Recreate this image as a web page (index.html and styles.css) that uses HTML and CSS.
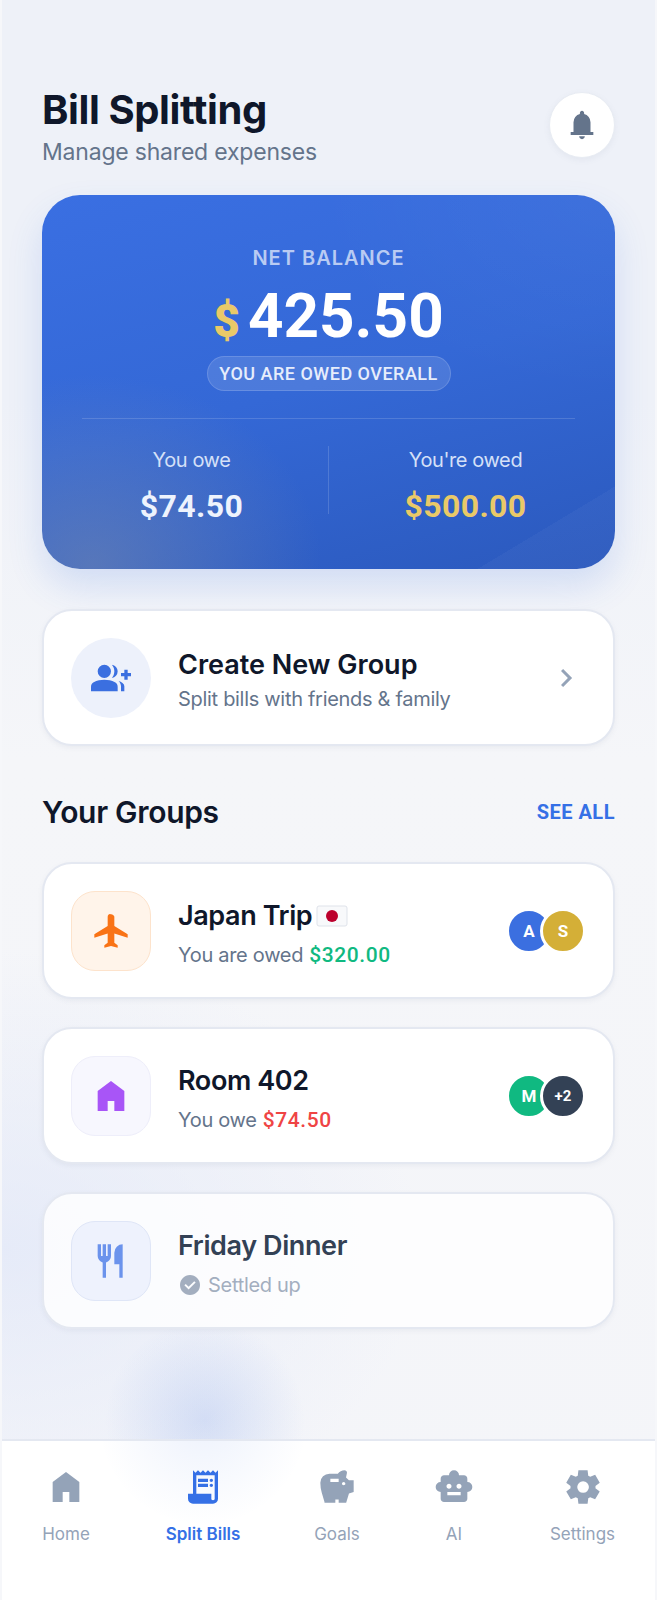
FILE: index.html
```html
<!DOCTYPE html>
<html lang="en">
<head>
  <meta charset="UTF-8" />
  <meta name="viewport" content="width=device-width, initial-scale=1.0"/>
  <title>Bill Splitting</title>
  <link rel="stylesheet" href="styles.css">
</head>
<body>
  <div class="screen">
    <main class="content">
      <header class="top">
        <div>
          <h1>Bill Splitting</h1>
          <p class="subtitle">Manage shared expenses</p>
        </div>
        <button class="bell">
          <svg width="34" height="34" viewBox="0 -960 960 960"><path d="M160-200v-80h80v-280q0-83 50-147.5T420-792v-28q0-25 17.5-42.5T480-880q25 0 42.5 17.5T540-820v28q80 20 130 84.5T720-560v280h80v80H160ZM480-80q-33 0-56.5-23.5T400-160h160q0 33-23.5 56.5T480-80Z"/></svg>
        </button>
      </header>

      <section class="balance">
        <div class="balance-label">NET BALANCE</div>
        <div class="balance-amount"><span class="dollar">$</span>425.50</div>
        <div class="balance-pill">YOU ARE OWED OVERALL</div>
        <div class="balance-stats">
          <div class="stat">
            <div class="stat-label">You owe</div>
            <div class="stat-value">$74.50</div>
          </div>
          <div class="stat-line"></div>
          <div class="stat">
            <div class="stat-label">You're owed</div>
            <div class="stat-value gold">$500.00</div>
          </div>
        </div>
      </section>

      <a class="card create" href="#">
        <div class="icon-round">
          <svg width="40" height="40" viewBox="0 -960 960 960"><path d="M500-482q29-32 44.5-73t15.5-85q0-44-15.5-85T500-798q60 8 100 53t40 105q0 60-40 105t-100 53Zm220 322v-120q0-36-16-68.5T662-406q51 18 94.5 46.5T800-280v120h-80Zm80-280v-80h-80v-80h80v-80h80v80h80v80h-80v80ZM320-480q-66 0-113-47t-47-113q0-66 47-113t113-47q66 0 113 47t47 113q0 66-47 113t-113 47ZM0-160v-112q0-34 17.5-62.5T64-378q62-31 126-46.5T320-440q66 0 130 15.5T576-378q29 15 46.5 43.5T640-272v112H0Z"/></svg>
        </div>
        <div class="card-text">
          <div class="card-title">Create New Group</div>
          <div class="card-sub">Split bills with friends &amp; family</div>
        </div>
        <svg class="chevron" width="36" height="36" viewBox="0 -960 960 960"><path d="M504-480 320-664l56-56 240 240-240 240-56-56 184-184Z"/></svg>
      </a>

      <div class="section-head">
        <h2>Your Groups</h2>
        <a class="see-all" href="#">SEE ALL</a>
      </div>

      <div class="groups">
        <div class="card">
          <div class="icon-box orange">
            <svg width="40" height="40" viewBox="0 -960 960 960"><path d="M320-80v-60l80-60v-220L80-320v-80l320-200v-220q0-33 23.5-56.5T480-880q33 0 56.5 23.5T560-820v220l320 200v80L560-420v220l80 60v60l-160-40-160 40Z"/></svg>
          </div>
          <div class="card-text">
            <div class="card-title">Japan Trip
              <svg width="32" height="24" viewBox="0 0 32 24"><rect x="1" y="2" width="30" height="20" rx="2" fill="#f8f9fb" stroke="#dfe3ea"/><circle cx="16" cy="12" r="6" fill="#bc002d"/></svg>
            </div>
            <div class="card-sub">You are owed <span class="amount green">$320.00</span></div>
          </div>
          <div class="avatars">
            <span class="avatar blue">A</span>
            <span class="avatar yellow">S</span>
          </div>
        </div>

        <div class="card">
          <div class="icon-box purple">
            <svg width="40" height="40" viewBox="0 -960 960 960"><path d="M160-120v-480l320-240 320 240v480H560v-240H400v240H160Z"/></svg>
          </div>
          <div class="card-text">
            <div class="card-title">Room 402</div>
            <div class="card-sub">You owe <span class="amount red">$74.50</span></div>
          </div>
          <div class="avatars">
            <span class="avatar teal">M</span>
            <span class="avatar dark">+2</span>
          </div>
        </div>

        <div class="card settled">
          <div class="icon-box pale">
            <svg width="40" height="40" viewBox="0 -960 960 960"><path d="M280-80v-366q-51-14-85.5-56T160-600v-280h80v280h40v-280h80v280h40v-280h80v280q0 56-34.5 98T360-446v366h-80Zm400 0v-320H560v-280q0-83 58.5-141.5T760-880v800h-80Z"/></svg>
          </div>
          <div class="card-text">
            <div class="card-title">Friday Dinner</div>
            <div class="card-sub">
              <svg width="24" height="24" viewBox="0 -960 960 960"><path d="m424-296 282-282-56-56-226 226-114-114-56 56 170 170Zm56 216q-83 0-156-31.5T197-197q-54-54-85.5-127T80-480q0-83 31.5-156T197-763q54-54 127-85.5T480-880q83 0 156 31.5T763-763q54 54 85.5 127T880-480q0 83-31.5 156T763-197q-54 54-127 85.5T480-80Z"/></svg>
              Settled up
            </div>
          </div>
        </div>
      </div>
    </main>

    <nav class="tabbar">
      <a class="tab" href="#">
        <svg width="40" height="40" viewBox="0 -960 960 960"><path d="M160-120v-480l320-240 320 240v480H560v-240H400v240H160Z"/></svg>
        Home
      </a>
      <a class="tab active" href="#">
        <svg width="40" height="40" viewBox="0 -960 960 960"><path d="M240-80q-50 0-85-35t-35-85v-120h120v-560l60 60 60-60 60 60 60-60 60 60 60-60 60 60 60-60 60 60 60-60v680q0 50-35 85t-85 35H240Zm480-80q17 0 28.5-11.5T760-200v-560H320v440h360v120q0 17 11.5 28.5T720-160ZM360-600v-80h240v80H360Zm0 120v-80h240v80H360Zm320-120q-17 0-28.5-11.5T640-640q0-17 11.5-28.5T680-680q17 0 28.5 11.5T720-640q0 17-11.5 28.5T680-600Zm0 120q-17 0-28.5-11.5T640-520q0-17 11.5-28.5T680-560q17 0 28.5 11.5T720-520q0 17-11.5 28.5T680-480Z"/></svg>
        Split Bills
      </a>
      <a class="tab" href="#">
        <svg width="40" height="40" viewBox="0 -960 960 960"><path fill-rule="evenodd" d="M180-120q-34-114-67-227.5T80-580q0-92 64-156t156-64h200q29-38 70.5-59t89.5-21q25 0 42.5 17.5T720-820l-24 110 71 70h113v279l-113 37-67 224H520v-80h-80v80H180Zm140-560v80h200v-80H320Zm320 80q-17 0-28.5 11.5T600-560q0 17 11.5 28.5T640-520q17 0 28.5-11.5T680-560q0-17-11.5-28.5T640-600Z"/></svg>
        Goals
      </a>
      <a class="tab" href="#">
        <svg width="40" height="40" viewBox="0 -960 960 960"><path d="M160-360q-50 0-85-35t-35-85q0-50 35-85t85-35v-80q0-33 23.5-56.5T240-760h120q0-50 35-85t85-35q50 0 85 35t35 85h120q33 0 56.5 23.5T800-680v80q50 0 85 35t35 85q0 50-35 85t-85 35v160q0 33-23.5 56.5T720-120H240q-33 0-56.5-23.5T160-200v-160Zm200-80q25 0 42.5-17.5T420-500q0-25-17.5-42.5T360-560q-25 0-42.5 17.5T300-500q0 25 17.5 42.5T360-440Zm240 0q25 0 42.5-17.5T660-500q0-25-17.5-42.5T600-560q-25 0-42.5 17.5T540-500q0 25 17.5 42.5T600-440ZM320-280h320v-80H320v80Z"/></svg>
        AI
      </a>
      <a class="tab" href="#">
        <svg width="40" height="40" viewBox="0 -960 960 960"><path d="m370-80-16-128q-13-5-24.5-12T307-235l-119 50L78-375l103-78q-1-7-1-13.5v-27q0-6.5 1-13.5L78-585l110-190 119 50q11-8 23-15t24-12l16-128h220l16 128q13 5 24.5 12t22.5 15l119-50 110 190-103 78q1 7 1 13.5v27q0 6.5-2 13.5l103 78-110 190-118-50q-11 8-23 15t-24 12L590-80H370Zm112-260q58 0 99-41t41-99q0-58-41-99t-99-41q-59 0-99.5 41T342-480q0 58 40.5 99t99.5 41Z"/></svg>
        Settings
      </a>
    </nav>
  </div>
</body>
</html>
```

FILE: styles.css
```css
* {
  box-sizing: border-box;
}

html, body {
  margin: 0;
  padding: 0;
}

body {
  font-family: Inter, "Noto Sans", sans-serif;
  color: #0f172a;
  background: #f5f6f9;
}

a {
  color: inherit;
  text-decoration: none;
}

svg {
  display: block;
  fill: currentColor;
}

.screen {
  height: 1600px;
  display: flex;
  flex-direction: column;
  overflow: hidden;
  background:
    radial-gradient(circle at 203px 1420px, rgba(59,111,224,0.16), rgba(59,111,224,0) 100px),
    radial-gradient(ellipse 420px 300px at 0 1250px, rgba(226,232,248,0.8), rgba(226,232,248,0)),
    linear-gradient(180deg, #eef1f8 0, #eef1f8 400px, #f5f6f9 760px, #f4f5f9 100%);
  border-left: 2px solid #f6f7fa;
  border-right: 2px solid #f6f7fa;
}

.content {
  flex: 1;
  padding: 87px 40px 0;
}

/* header */
.top {
  display: flex;
  justify-content: space-between;
  align-items: flex-start;
  height: 84px;
}

h1 {
  margin: 0;
  font-size: 40px;
  line-height: 46px;
  font-weight: 700;
  letter-spacing: -0.4px;
  color: #0f172a;
}

.subtitle {
  margin: 4px 0 0;
  font-size: 23px;
  line-height: 30px;
  letter-spacing: -0.2px;
  color: #64748b;
}

.bell {
  width: 66px;
  height: 66px;
  margin: 5px 0 0;
  padding: 0;
  display: flex;
  align-items: center;
  justify-content: center;
  background: #fff;
  border: 1px solid #e8ecf3;
  border-radius: 50%;
  color: #64748b;
  box-shadow: 0 2px 6px rgba(100,116,139,0.08);
}

/* balance card */
.balance {
  margin-top: 24px;
  height: 374px;
  padding: 51px 40px 0;
  border-radius: 38px;
  text-align: center;
  color: #fff;
  background:
    radial-gradient(ellipse 230px 190px at 50px 370px, rgba(125,140,170,0.5), rgba(125,140,170,0)),
    radial-gradient(ellipse 300px 200px at 100% 0, rgba(255,255,255,0.04), rgba(255,255,255,0)),
    linear-gradient(149deg, rgba(255,255,255,0) 88.5%, rgba(255,255,255,0.03) 88.5%),
    linear-gradient(165deg, #3a6fe2 0, #3468d6 50%, #2b59bd 100%);
  box-shadow: 0 18px 34px rgba(59,111,224,0.17);
}

.balance-label {
  font-size: 20px;
  line-height: 24px;
  font-weight: 600;
  letter-spacing: 1px;
  color: #b9cbf3;
}

.balance-amount {
  margin-top: 11px;
  font-family: Roboto, sans-serif;
  font-size: 62px;
  line-height: 70px;
  font-weight: 700;
}

.dollar {
  margin-right: 8px;
  font-size: 46px;
  font-weight: 900;
  color: #e9c968;
}

.balance-pill {
  width: 244px;
  height: 35px;
  margin: 0 auto;
  border: 1px solid rgba(255,255,255,0.15);
  border-radius: 18px;
  background: rgba(255,255,255,0.12);
  font-family: Roboto, sans-serif;
  font-size: 18px;
  line-height: 33px;
  font-weight: 500;
  letter-spacing: 0.5px;
  color: #e6edfb;
}

.balance-stats {
  display: grid;
  grid-template-columns: 1fr 1px 1fr;
  gap: 27px;
  margin-top: 27px;
  padding-top: 27px;
  border-top: 1px solid rgba(255,255,255,0.15);
}

.stat-label {
  font-size: 20px;
  line-height: 28px;
  letter-spacing: -0.4px;
  color: #d5e0f8;
}

.stat-value {
  margin-top: 13px;
  font-family: Roboto, sans-serif;
  font-size: 32px;
  line-height: 38px;
  font-weight: 700;
  letter-spacing: 0.4px;
  color: #eef3fd;
}

.gold {
  color: #e9c968;
}

.stat-line {
  height: 68px;
  background: rgba(255,255,255,0.15);
}

/* cards */
.card {
  height: 137px;
  display: flex;
  align-items: center;
  padding: 0 27px;
  background: #fff;
  border: 2px solid #e4e8f1;
  border-radius: 30px;
  box-shadow: 0 2px 5px rgba(100,116,139,0.08);
}

.create {
  margin-top: 40px;
}

.icon-round,
.icon-box {
  flex: none;
  width: 80px;
  height: 80px;
  display: flex;
  align-items: center;
  justify-content: center;
}

.icon-round {
  border-radius: 50%;
  background: #edf1fb;
  color: #3b6fe0;
}

.icon-box {
  border-radius: 24px;
  border: 1px solid;
}

.orange {
  background: #fff4ea;
  border-color: #fde3cc;
  color: #f97316;
}

.purple {
  background: #f7f7fe;
  border-color: #eeeefa;
  color: #a855f7;
}

.pale {
  background: #eef2fd;
  border-color: #dfe6f7;
  color: #6b93ec;
}

.card-text {
  flex: 1;
  margin-left: 27px;
  padding-top: 4px;
}

.card-title {
  display: flex;
  align-items: center;
  gap: 4px;
  font-size: 27px;
  line-height: 36px;
  font-weight: 600;
  letter-spacing: -0.4px;
  color: #0f172a;
}

.card-sub {
  display: flex;
  align-items: center;
  gap: 6px;
  margin-top: 8px;
  font-size: 20px;
  line-height: 26px;
  letter-spacing: -0.3px;
  color: #64748b;
}

.create .card-title {
  letter-spacing: 0;
}

.create .card-sub {
  margin-top: 3px;
}

.amount {
  font-family: Roboto, sans-serif;
  font-weight: 500;
  letter-spacing: 0.6px;
  font-size: 21px;
}

.green {
  color: #10b981;
}

.red {
  color: #ef4444;
}

.chevron {
  color: #94a3b8;
  margin-right: 1px;
}

.section-head {
  display: flex;
  justify-content: space-between;
  align-items: center;
  margin-top: 45px;
  height: 42px;
}

h2 {
  margin: 0;
  font-size: 30px;
  font-weight: 600;
  letter-spacing: -0.3px;
}

.see-all {
  font-family: Roboto, sans-serif;
  font-size: 20px;
  font-weight: 700;
  letter-spacing: 0.5px;
  color: #3570e6;
}

.groups {
  display: flex;
  flex-direction: column;
  gap: 28px;
  margin-top: 29px;
}

.avatars {
  display: flex;
}

.avatar {
  width: 46px;
  height: 46px;
  display: flex;
  align-items: center;
  justify-content: center;
  border: 3px solid #fff;
  border-radius: 50%;
  font-family: Roboto, sans-serif;
  font-size: 17px;
  font-weight: 700;
  color: #fff;
}

.avatar + .avatar {
  margin-left: -12px;
}

.blue {
  background: #3b6fe0;
}

.yellow {
  background: #d4af37;
}

.teal {
  background: #10b981;
}

.dark {
  background: #334155;
  font-size: 15px;
}

.settled {
  background: rgba(255,255,255,0.8);
}

.settled .card-title {
  color: #334155;
}

.settled .card-sub {
  color: #a3aebf;
}

/* bottom nav */
.tabbar {
  height: 161px;
  display: grid;
  grid-template-columns: 128px 146px 122px 112px 1fr;
  padding-top: 26px;
  align-items: start;
  background:
    radial-gradient(circle at 201px -20px, rgba(59,111,224,0.09), rgba(59,111,224,0) 105px),
    #fff;
  border-top: 2px solid #e4e8f1;
}

.tab {
  display: flex;
  flex-direction: column;
  align-items: center;
  gap: 16px;
  font-size: 17px;
  line-height: 22px;
  color: #94a3b8;
}

.tab.active {
  font-weight: 600;
  color: #3570e6;
}
```
